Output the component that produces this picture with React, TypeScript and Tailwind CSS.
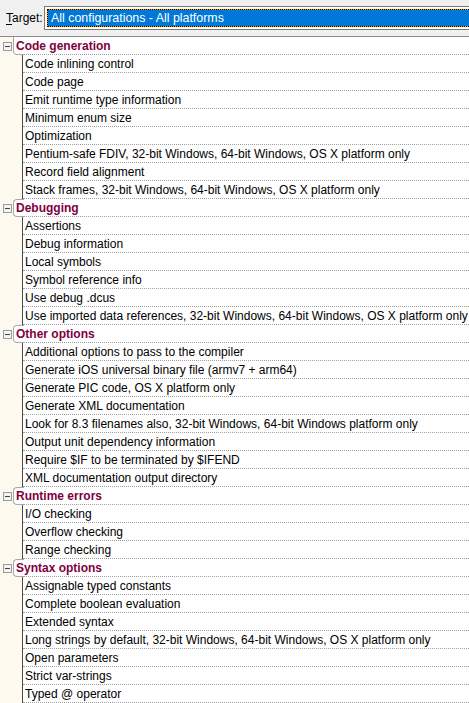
import React from "react";

interface Group {
  name: string;
  items: string[];
}

const groups: Group[] = [
  {
    name: "Code generation",
    items: [
      "Code inlining control",
      "Code page",
      "Emit runtime type information",
      "Minimum enum size",
      "Optimization",
      "Pentium-safe FDIV, 32-bit Windows, 64-bit Windows, OS X platform only",
      "Record field alignment",
      "Stack frames, 32-bit Windows, 64-bit Windows, OS X platform only",
    ],
  },
  {
    name: "Debugging",
    items: [
      "Assertions",
      "Debug information",
      "Local symbols",
      "Symbol reference info",
      "Use debug .dcus",
      "Use imported data references, 32-bit Windows, 64-bit Windows, OS X platform only",
    ],
  },
  {
    name: "Other options",
    items: [
      "Additional options to pass to the compiler",
      "Generate iOS universal binary file (armv7 + arm64)",
      "Generate PIC code, OS X platform only",
      "Generate XML documentation",
      "Look for 8.3 filenames also, 32-bit Windows, 64-bit Windows platform only",
      "Output unit dependency information",
      "Require $IF to be terminated by $IFEND",
      "XML documentation output directory",
    ],
  },
  {
    name: "Runtime errors",
    items: ["I/O checking", "Overflow checking", "Range checking"],
  },
  {
    name: "Syntax options",
    items: [
      "Assignable typed constants",
      "Complete boolean evaluation",
      "Extended syntax",
      "Long strings by default, 32-bit Windows, 64-bit Windows, OS X platform only",
      "Open parameters",
      "Strict var-strings",
      "Typed @ operator",
    ],
  },
];

function GroupHeader({ name, first }: { name: string; first: boolean }) {
  return (
    <div className="flex h-[18px]">
      <div className="w-[13px] bg-[#fdf9ee] flex items-center justify-center pl-[1px]">
        <div className="w-[9px] h-[9px] border border-[#9a9a9a] bg-[#f4f4f4] flex items-center justify-center">
          <div className="w-[5px] h-px bg-[#404040]" />
        </div>
      </div>
      <div className="relative flex-1 bg-white">
        <div
          className={`absolute left-0 top-0 bottom-0 w-[11px] border-l border-b border-[#a8a8a8] rounded-bl-[4px] ${
            first ? "" : "border-t rounded-tl-[4px]"
          }`}
        />
        <div className="absolute left-[11px] right-0 bottom-0 border-b border-dotted border-[#a0a0a0]" />
        <div className="pl-[3px] pt-px leading-[17px] font-bold text-[#800040] whitespace-nowrap">
          {name}
        </div>
      </div>
    </div>
  );
}

function ItemRow({ label }: { label: string }) {
  return (
    <div className="flex h-[18px]">
      <div className="w-[23px] bg-[#fdf9ee] border-r border-[#4a4a4a] shrink-0" />
      <div className="flex-1 h-[18px] bg-white border-b border-dotted border-[#a0a0a0] pl-[2px]">
        <div className="pt-px leading-[17px] h-[17px] whitespace-nowrap">{label}</div>
      </div>
    </div>
  );
}

export default function App() {
  return (
    <div className="w-[469px] h-[703px] overflow-hidden bg-white text-[12px] text-black font-['Liberation_Sans',Arial,sans-serif]">
      <div className="h-[36px] bg-[#f0f0f0] flex items-start pt-[6px]">
        <div className="w-[44px] pl-[6px] h-[24px] leading-[24px] shrink-0">
          <span className="underline underline-offset-2">T</span>arget:
        </div>
        <div className="h-[24px] w-[440px] shrink-0 border border-[#7a7a7a] bg-white p-[2px]">
          <div className="h-[18px] bg-[#0078d7] border border-[#ff9b00] outline-1 outline-dotted outline-black outline-offset-[-1px] text-white leading-[16px] pl-[3px] text-[12.4px] whitespace-nowrap">
            All configurations - All platforms
          </div>
        </div>
      </div>
      <div className="border-t border-[#8c8c8c]">
        {groups.map((g, gi) => (
          <div key={g.name}>
            <GroupHeader name={g.name} first={gi === 0} />
            {g.items.map((it) => (
              <ItemRow key={it} label={it} />
            ))}
          </div>
        ))}
      </div>
    </div>
  );
}
